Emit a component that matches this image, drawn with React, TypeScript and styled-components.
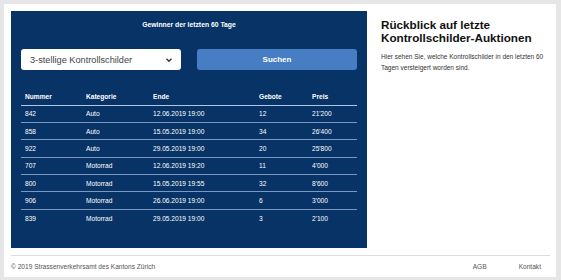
import styled, { createGlobalStyle } from 'styled-components'

const rows = [
  { nummer: '842', kategorie: 'Auto', ende: '12.06.2019 19:00', gebote: '12', preis: "21'200" },
  { nummer: '858', kategorie: 'Auto', ende: '15.05.2019 19:00', gebote: '34', preis: "26'400" },
  { nummer: '922', kategorie: 'Auto', ende: '29.05.2019 19:00', gebote: '20', preis: "25'800" },
  { nummer: '707', kategorie: 'Motorrad', ende: '12.06.2019 19:20', gebote: '11', preis: "4'000" },
  { nummer: '800', kategorie: 'Motorrad', ende: '15.05.2019 19:55', gebote: '32', preis: "8'600" },
  { nummer: '906', kategorie: 'Motorrad', ende: '26.06.2019 19:00', gebote: '6', preis: "3'000" },
  { nummer: '839', kategorie: 'Motorrad', ende: '29.05.2019 19:00', gebote: '3', preis: "2'100" },
]

const App = () => {
  return (
    <>
      <GlobalStyle />
      <Card>
        <Main>
          <Panel>
            <PanelTitle>Gewinner der letzten 60 Tage</PanelTitle>
            <Controls>
              <Select>
                <span>3-stellige Kontrollschilder</span>
                <svg width="8" height="6" viewBox="0 0 8 6">
                  <path d="M1.5 1.8 L4 4.2 L6.5 1.8" fill="none" stroke="#333" strokeWidth="1.4" />
                </svg>
              </Select>
              <SearchButton>Suchen</SearchButton>
            </Controls>
            <Table>
              <thead>
                <tr>
                  <Th $w={61}>Nummer</Th>
                  <Th $w={67}>Kategorie</Th>
                  <Th $w={106}>Ende</Th>
                  <Th $w={53}>Gebote</Th>
                  <Th>Preis</Th>
                </tr>
              </thead>
              <tbody>
                {rows.map((r) => (
                  <Tr key={r.nummer}>
                    <Td>{r.nummer}</Td>
                    <Td>{r.kategorie}</Td>
                    <Td>{r.ende}</Td>
                    <Td>{r.gebote}</Td>
                    <Td>{r.preis}</Td>
                  </Tr>
                ))}
              </tbody>
            </Table>
          </Panel>
          <Aside>
            <Heading>Rückblick auf letzte Kontrollschilder-Auktionen</Heading>
            <Text>
              Hier sehen Sie, welche Kontrollschilder in den letzten 60 Tagen versteigert worden sind.
            </Text>
          </Aside>
        </Main>
        <Footer>
          <span>© 2019 Strassenverkehrsamt des Kantons Zürich</span>
          <FooterLinks>
            <FooterLink>AGB</FooterLink>
            <FooterLink>Kontakt</FooterLink>
          </FooterLinks>
        </Footer>
      </Card>
    </>
  )
}

const GlobalStyle = createGlobalStyle`
  * {
    box-sizing: border-box;
  }

  body {
    margin: 0;
    background: #e6e6e6;
    font-family: 'Liberation Sans', Arial, sans-serif;
  }
`

const Card = styled.div`
  margin: 4px 5px 3px 4px;
  height: 273px;
  padding: 7px 6px 0 7px;
  background: #fff;
  display: flex;
  flex-direction: column;
`

const Main = styled.div`
  display: flex;
  gap: 14px;
  height: 237px;
  flex-shrink: 0;
`

const Panel = styled.div`
  width: 356px;
  flex-shrink: 0;
  background: #083366;
  padding: 9px 10px 0;
  color: #fff;
`

const PanelTitle = styled.div`
  text-align: center;
  font-size: 6.8px;
  font-weight: 700;
  line-height: 9px;
`

const Controls = styled.div`
  display: flex;
  justify-content: space-between;
  margin-top: 20px;
`

const Select = styled.div`
  width: 160px;
  height: 21px;
  background: #fff;
  border-radius: 3px;
  display: flex;
  align-items: center;
  justify-content: space-between;
  padding: 0 8px 0 9px;
  color: #444;
  font-size: 9.2px;
`

const SearchButton = styled.button`
  width: 160px;
  height: 21px;
  border: none;
  border-radius: 3px;
  background: #477dc2;
  color: #fff;
  font-family: inherit;
  font-size: 8px;
  font-weight: 700;
  padding: 0;
`

const Table = styled.table`
  width: 100%;
  margin-top: 18px;
  border-collapse: collapse;
  font-size: 6.6px;
`

const Th = styled.th<{ $w?: number }>`
  width: ${(p) => (p.$w ? `${p.$w}px` : 'auto')};
  text-align: left;
  font-weight: 700;
  padding: 0 4px;
  height: 17px;
  vertical-align: middle;
  border-bottom: 1.5px solid #b3c6e0;
`

const Tr = styled.tr`
  border-bottom: 1px solid #7b98c2;

  &:last-child {
    border-bottom: none;
  }
`

const Td = styled.td`
  padding: 0 4px;
  height: 17.4px;
  vertical-align: middle;
`

const Aside = styled.div`
  flex: 1;
  padding-top: 7px;
  color: #111;
`

const Heading = styled.h1`
  margin: 0;
  font-size: 11.7px;
  line-height: 13px;
  font-weight: 700;
`

const Text = styled.p`
  margin: 7px 0 0;
  font-size: 6.5px;
  line-height: 11px;
  color: #333;
`

const Footer = styled.footer`
  flex-shrink: 0;
  margin-top: 7px;
  border-top: 1px solid #ddd;
  display: flex;
  justify-content: space-between;
  align-items: center;
  height: 22px;
  font-size: 6.6px;
  color: #555;
`

const FooterLinks = styled.div`
  display: flex;
  gap: 32px;
  padding-right: 9px;
`

const FooterLink = styled.a`
  color: #555;
  cursor: pointer;
`

export default App
